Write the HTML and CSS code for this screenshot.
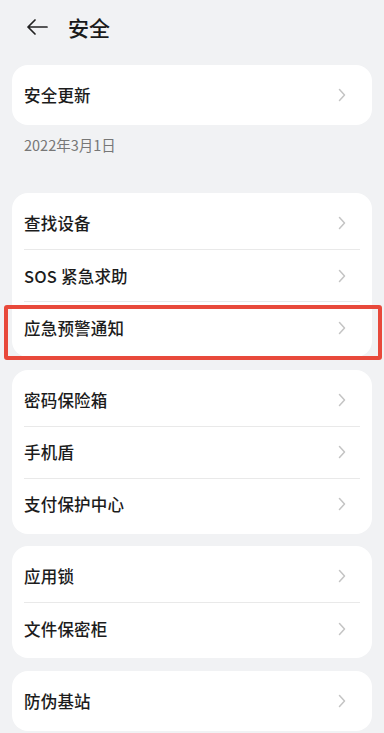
FILE: index.html
```html
<!DOCTYPE html>
<html lang="zh-CN">
<head>
<meta charset="utf-8">
<title>安全</title>
<link rel="stylesheet" href="styles.css">
</head>
<body>
<div class="page">
  <header class="topbar">
    <svg class="back" width="22" height="16" viewBox="0 0 22 16"><path d="M21 8H2M9 1L2 8l7 7" fill="none" stroke="#222" stroke-width="1.7" stroke-linecap="round" stroke-linejoin="round"/></svg>
    <h1 class="title">安全</h1>
  </header>

  <section class="card first">
    <div class="row"><span class="label">安全更新</span><svg class="chev" width="8" height="14" viewBox="0 0 8 14"><path d="M1.5 1.5L6.5 7l-5 5.5" fill="none" stroke="#c4c4c4" stroke-width="1.5" stroke-linecap="round" stroke-linejoin="round"/></svg></div>
  </section>
  <p class="date">2022年3月1日</p>

  <section class="card group2">
    <div class="row"><span class="label">查找设备</span><svg class="chev" width="8" height="14" viewBox="0 0 8 14"><path d="M1.5 1.5L6.5 7l-5 5.5" fill="none" stroke="#c4c4c4" stroke-width="1.5" stroke-linecap="round" stroke-linejoin="round"/></svg></div>
    <div class="row"><span class="label">SOS 紧急求助</span><svg class="chev" width="8" height="14" viewBox="0 0 8 14"><path d="M1.5 1.5L6.5 7l-5 5.5" fill="none" stroke="#c4c4c4" stroke-width="1.5" stroke-linecap="round" stroke-linejoin="round"/></svg></div>
    <div class="row highlighted"><span class="label">应急预警通知</span><svg class="chev" width="8" height="14" viewBox="0 0 8 14"><path d="M1.5 1.5L6.5 7l-5 5.5" fill="none" stroke="#c4c4c4" stroke-width="1.5" stroke-linecap="round" stroke-linejoin="round"/></svg><span class="mark"></span></div>
  </section>

  <section class="card">
    <div class="row"><span class="label">密码保险箱</span><svg class="chev" width="8" height="14" viewBox="0 0 8 14"><path d="M1.5 1.5L6.5 7l-5 5.5" fill="none" stroke="#c4c4c4" stroke-width="1.5" stroke-linecap="round" stroke-linejoin="round"/></svg></div>
    <div class="row"><span class="label">手机盾</span><svg class="chev" width="8" height="14" viewBox="0 0 8 14"><path d="M1.5 1.5L6.5 7l-5 5.5" fill="none" stroke="#c4c4c4" stroke-width="1.5" stroke-linecap="round" stroke-linejoin="round"/></svg></div>
    <div class="row"><span class="label">支付保护中心</span><svg class="chev" width="8" height="14" viewBox="0 0 8 14"><path d="M1.5 1.5L6.5 7l-5 5.5" fill="none" stroke="#c4c4c4" stroke-width="1.5" stroke-linecap="round" stroke-linejoin="round"/></svg></div>
  </section>

  <section class="card">
    <div class="row"><span class="label">应用锁</span><svg class="chev" width="8" height="14" viewBox="0 0 8 14"><path d="M1.5 1.5L6.5 7l-5 5.5" fill="none" stroke="#c4c4c4" stroke-width="1.5" stroke-linecap="round" stroke-linejoin="round"/></svg></div>
    <div class="row"><span class="label">文件保密柜</span><svg class="chev" width="8" height="14" viewBox="0 0 8 14"><path d="M1.5 1.5L6.5 7l-5 5.5" fill="none" stroke="#c4c4c4" stroke-width="1.5" stroke-linecap="round" stroke-linejoin="round"/></svg></div>
  </section>

  <section class="card">
    <div class="row"><span class="label">防伪基站</span><svg class="chev" width="8" height="14" viewBox="0 0 8 14"><path d="M1.5 1.5L6.5 7l-5 5.5" fill="none" stroke="#c4c4c4" stroke-width="1.5" stroke-linecap="round" stroke-linejoin="round"/></svg></div>
  </section>
</div>
</body>
</html>
```

FILE: styles.css
```css
html, body {
  margin: 0;
  padding: 0;
  background: #f1f2f4;
}
body {
  font-family: "Noto Sans CJK SC", "Noto Sans", sans-serif;
  color: #1c1c1c;
  width: 384px;
  height: 733px;
  overflow: hidden;
}
.page {
  padding: 0 12px;
}
.topbar {
  height: 54px;
  display: flex;
  align-items: center;
  padding-left: 14px;
  gap: 20px;
}
.back {
  display: block;
  flex: none;
}
.title {
  margin: 0;
  font-size: 21px;
  font-weight: 500;
  line-height: 28px;
  color: #1a1a1a;
}
.card {
  background: #fff;
  border-radius: 16px;
  padding: 4px 0;
  margin-top: 12.5px;
}
.card.first {
  margin-top: 11px;
}
.card.group2 {
  margin-top: 38px;
}
.date {
  margin: 10px 0 0 12px;
  font-size: 14.5px;
  line-height: 20px;
  color: #777;
}
.row {
  position: relative;
  height: 52px;
  margin: 0 12px;
  display: flex;
  align-items: center;
  justify-content: space-between;
}
.row + .row {
  border-top: 1px solid #e9e9e9;
  height: 51px;
}
.label {
  font-size: 16.5px;
  font-weight: 500;
  color: #1c1c1c;
  letter-spacing: 0.2px;
}
.chev {
  display: block;
  margin-right: 14px;
  flex: none;
}
.mark {
  position: absolute;
  left: -20px;
  right: -22px;
  top: 3px;
  bottom: -7px;
  border: 4.5px solid #e8493b;
  border-radius: 3px;
  pointer-events: none;
}
```
